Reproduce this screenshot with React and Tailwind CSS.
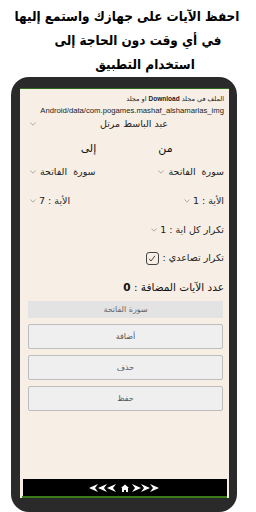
import React from "react";

const ar = { fontFamily: '"DejaVu Sans", sans-serif' };

function Caret() {
  return (
    <svg width="6" height="4" viewBox="0 0 6 4" className="shrink-0">
      <path d="M0.5 0.5 L3 3.2 L5.5 0.5" fill="none" stroke="#9a9a9a" strokeWidth="0.8" />
    </svg>
  );
}

function NavArrows() {
  const left = (x) => `${x},4 ${x + 9},0 ${x + 6},4 ${x + 9},8`;
  const right = (x) => `${x + 9},4 ${x},0 ${x + 3},4 ${x},8`;
  return (
    <svg width="72" height="8" viewBox="0 0 72 8">
      <polygon points={left(0)} fill="#fff" />
      <polygon points={left(9)} fill="#fff" />
      <polygon points={left(18)} fill="#fff" />
      <path d="M32 4 L36 0.5 L40 4 L39 4 L39 8 L37 8 L37 6 L35 6 L35 8 L33 8 L33 4 Z" fill="#fff" />
      <polygon points={right(43)} fill="#fff" />
      <polygon points={right(52)} fill="#fff" />
      <polygon points={right(61)} fill="#fff" />
    </svg>
  );
}

function Button({ label }) {
  return (
    <div className="h-[25px] flex items-center justify-center bg-[#efefef] border border-[#bdbdbd] rounded-[2px] text-[8px] text-[#555]">
      {label}
    </div>
  );
}

export default function App() {
  return (
    <div className="w-[256px] h-[512px] bg-white flex flex-col overflow-hidden" style={ar}>
      <div
        dir="rtl"
        className="h-[77px] pt-[5px] text-center font-bold text-black text-[13.4px] leading-[24px] whitespace-nowrap"
        style={{ fontFamily: '"DejaVu Sans Condensed", "DejaVu Sans", sans-serif' }}
      >
        <div className="pr-[2px]">احفظ الآيات على جهازك واستمع إليها</div>
        <div className="pl-[20px]">في أي وقت دون الحاجة إلى</div>
        <div className="pl-[34px]">استخدام التطبيق</div>
      </div>

      <div className="ml-[11px] mr-[19px] flex-1 bg-[#2a2a2a] rounded-[18px] pt-[11px] pl-[9px] pr-[8px] pb-[14px] flex flex-col">
        <div className="flex-1 flex flex-col bg-[#f7efe5] border-t border-[#2f6a1c]">
          <div dir="rtl" className="flex-1 flex flex-col pr-[5px] pl-[10px]">
            <div className="mt-[5px] text-[6.5px] text-[#222] leading-[10px]">
              الملف في مجلد <span className="font-bold" style={{ fontFamily: '"Liberation Sans", sans-serif' }}>Download</span> او مجلد
            </div>
            <div dir="ltr" className="text-right text-[7.7px] text-[#222] leading-[13px]" style={{ fontFamily: '"Liberation Sans", sans-serif' }}>
              Android/data/com.pogames.mashaf_alshamarlas_img
            </div>

            <div className="mt-[0px] h-[14px] flex items-center justify-between">
              <div className="flex-1 text-center text-[9.5px] text-[#222] pl-[8px]">عبد الباسط مرتل</div>
              <Caret />
            </div>

            <div className="mt-[11px] grid grid-cols-2 text-[11px] text-[#111] leading-[14px]">
              <div className="text-center pr-[20px]">من</div>
              <div className="text-center pl-[20px]">إلى</div>
            </div>

            <div className="mt-[9px] grid grid-cols-2 text-[9.5px] text-[#222] leading-[14px]">
              <div className="flex items-center gap-[4px]">
                <span>سورة &nbsp;الفاتحة</span>
                <Caret />
              </div>
              <div className="flex items-center justify-end gap-[4px]">
                <span>سورة &nbsp;الفاتحة</span>
                <Caret />
              </div>
            </div>

            <div className="mt-[15px] grid grid-cols-2 text-[9.5px] text-[#222] leading-[14px]">
              <div className="flex items-center gap-[3px]">
                <span>الأية : 1</span>
                <Caret />
              </div>
              <div className="flex items-center justify-end gap-[3px]">
                <span>الأية : 7</span>
                <Caret />
              </div>
            </div>

            <div className="mt-[15px] flex items-center gap-[3px] text-[9.5px] text-[#222] leading-[14px]">
              <span>تكرار كل اية : 1</span>
              <Caret />
            </div>

            <div className="mt-[13px] flex items-center gap-[4px] text-[9.5px] text-[#222] leading-[16px]">
              <span>تكرار تصاعدي :</span>
              <span className="w-[13px] h-[13px] border border-[#444] rounded-[3px] flex items-center justify-center">
                <svg width="8" height="7" viewBox="0 0 8 7">
                  <path d="M1 3.8 L3 6 L7 0.8" fill="none" stroke="#333" strokeWidth="0.9" />
                </svg>
              </span>
            </div>

            <div className="mt-[14px] text-[10.5px] text-[#111] leading-[14px]">
              عدد الآيات المضافة : <span className="font-bold">0</span>
            </div>

            <div className="mt-[7px] flex flex-col gap-[6px] ml-[-2px] mr-[1px]">
              <div className="h-[17px] flex items-center justify-center bg-[#e3e3e3] text-[8px] text-[#666]">سورة الفاتحة</div>
              <Button label="أضافة" />
              <Button label="حذف" />
              <Button label="حفظ" />
            </div>
          </div>

          <div className="ml-[3px] mr-[2px] h-[17px] bg-black flex items-center justify-center">
            <NavArrows />
          </div>
          <div className="ml-[2px] mr-[2px] h-[2px] bg-[#3a7a1a]" />
        </div>
      </div>
    </div>
  );
}
